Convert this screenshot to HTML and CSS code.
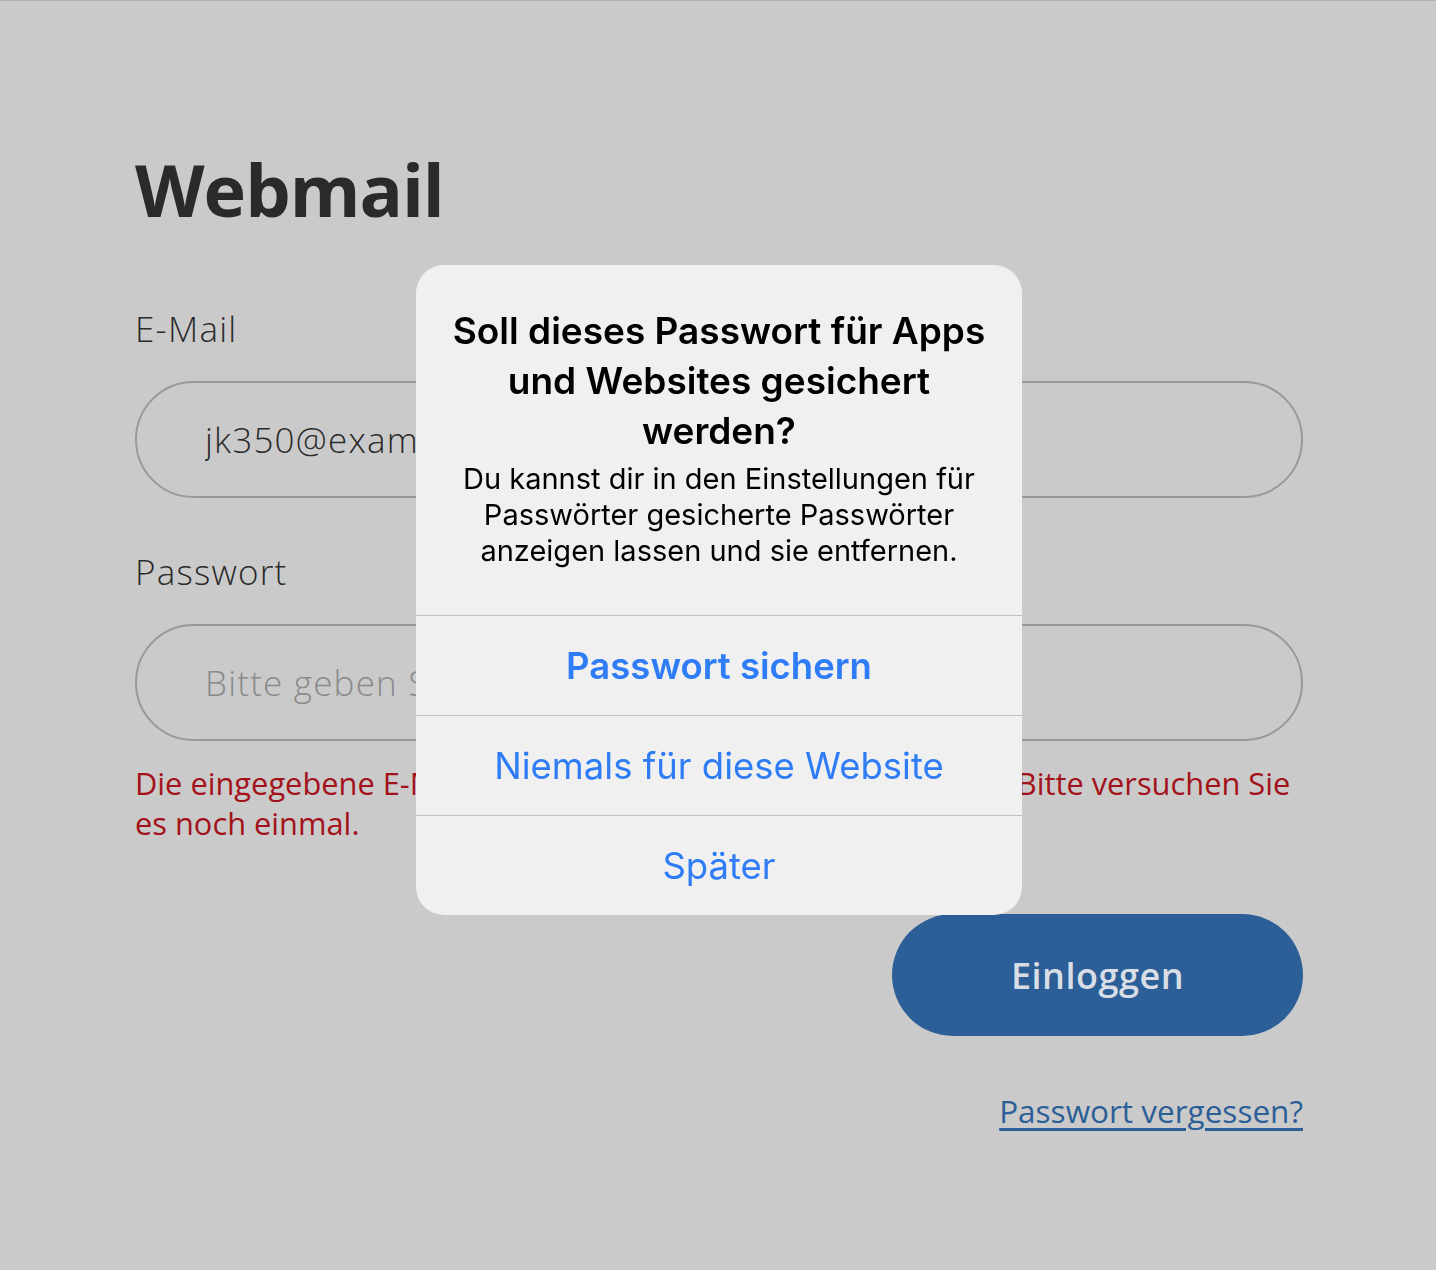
FILE: index.html
```html
<!DOCTYPE html>
<html lang="de">
<head>
	<meta charset="UTF-8">
	<meta name="viewport" content="width=device-width, initial-scale=1.0">
	<title>Webmail</title>
	<link rel="stylesheet" href="styles.css">
</head>
<body>
	<main class="login">
		<h1 class="login-title">Webmail</h1>
		<form class="login-form">
			<div class="field">
				<label class="field-label" for="email">E-Mail</label>
				<input class="field-input" type="text" id="email" value="jk350@example.com">
			</div>
			<div class="field">
				<label class="field-label" for="pass">Passwort</label>
				<input class="field-input" type="password" id="pass" placeholder="Bitte geben Sie Ihr Passwort ein">
			</div>
			<p class="login-error">Die eingegebene E-Mail-Adresse oder das Passwort ist falsch. Bitte versuchen Sie es noch einmal.</p>
			<div class="login-actions">
				<button type="button" class="btn-login">Einloggen</button>
				<a href="#" class="forgot">Passwort vergessen?</a>
			</div>
		</form>
	</main>

	<div class="overlay">
		<div class="alert">
			<div class="alert-text">
				<h2 class="alert-title">Soll dieses Passwort für Apps und Websites gesichert werden?</h2>
				<p class="alert-body">Du kannst dir in den Einstellungen für Passwörter gesicherte Passwörter anzeigen lassen und sie entfernen.</p>
			</div>
			<button type="button" class="alert-btn alert-btn-main">Passwort sichern</button>
			<button type="button" class="alert-btn">Niemals für diese Website</button>
			<button type="button" class="alert-btn">Später</button>
		</div>
	</div>
</body>
</html>
```

FILE: styles.css
```css
html, body {
	margin:0;
	height:100%;
}

body {
	background-color:#cacaca;
	border-top:1px solid #b2b2b2;
	box-sizing:border-box;
	font-family:"Open Sans", sans-serif;
	color:#2a2a2a;
}

.login {
	padding:138px 133px 0 135px;
}

.login-title {
	margin:0;
	font-size:72px;
	line-height:100px;
	font-weight:700;
	letter-spacing:-1px;
}

.login-form {
	margin-top:70px;
}

.field {
	display:flex;
	flex-direction:column;
}
.field + .field {
	margin-top:54px;
}

.field-label {
	font-size:35px;
	font-weight:300;
	line-height:40px;
	letter-spacing:1.2px;
	margin-bottom:32px;
}

.field-input {
	box-sizing:border-box;
	height:117px;
	border:2px solid #999;
	border-radius:60px;
	background:transparent;
	padding:0 68px;
	font-family:"Open Sans", sans-serif;
	font-size:35px;
	font-weight:300;
	letter-spacing:1.2px;
	color:#2a2a2a;
	outline:none;
}
.field-input::placeholder {
	color:#8a8a8a;
}

.login-error {
	margin:22px 0 0;
	font-size:30.8px;
	line-height:40px;
	color:#a3121a;
}

.login-actions {
	display:flex;
	flex-direction:column;
	align-items:flex-end;
	margin-top:71px;
}

.btn-login {
	width:411px;
	height:122px;
	border:none;
	border-radius:61px;
	background-color:#2c5f97;
	color:#d9dee6;
	font-family:"Open Sans", sans-serif;
	font-size:36px;
	font-weight:600;
	letter-spacing:0.5px;
}

.forgot {
	margin-top:55px;
	font-size:31.5px;
	line-height:40px;
	color:#2c5f97;
	text-underline-offset:5px;
}

/* ios style alert on top */
.overlay {
	position:fixed;
	top:0;
	left:0;
	right:0;
	bottom:0;
}

.alert {
	position:absolute;
	top:265px;
	left:416px;
	width:606px;
	background-color:#f0f0f0;
	border-radius:28px;
	overflow:hidden;
	font-family:Inter, "Roboto", sans-serif;
	text-align:center;
	color:#000;
}

.alert-text {
	padding:41px 36px 46px;
}

.alert-title {
	margin:0;
	font-size:37px;
	line-height:50px;
	font-weight:600;
}

.alert-body {
	margin:5px 0 0;
	font-size:29px;
	line-height:36px;
	font-weight:400;
}

.alert-btn {
	display:block;
	width:100%;
	height:100px;
	border:none;
	border-top:1px solid #c2c2c2;
	background:transparent;
	font-family:Inter, "Roboto", sans-serif;
	font-size:36.5px;
	color:#2e7cf6;
	padding:0;
}
.alert-btn-main {
	font-weight:600;
}
```
